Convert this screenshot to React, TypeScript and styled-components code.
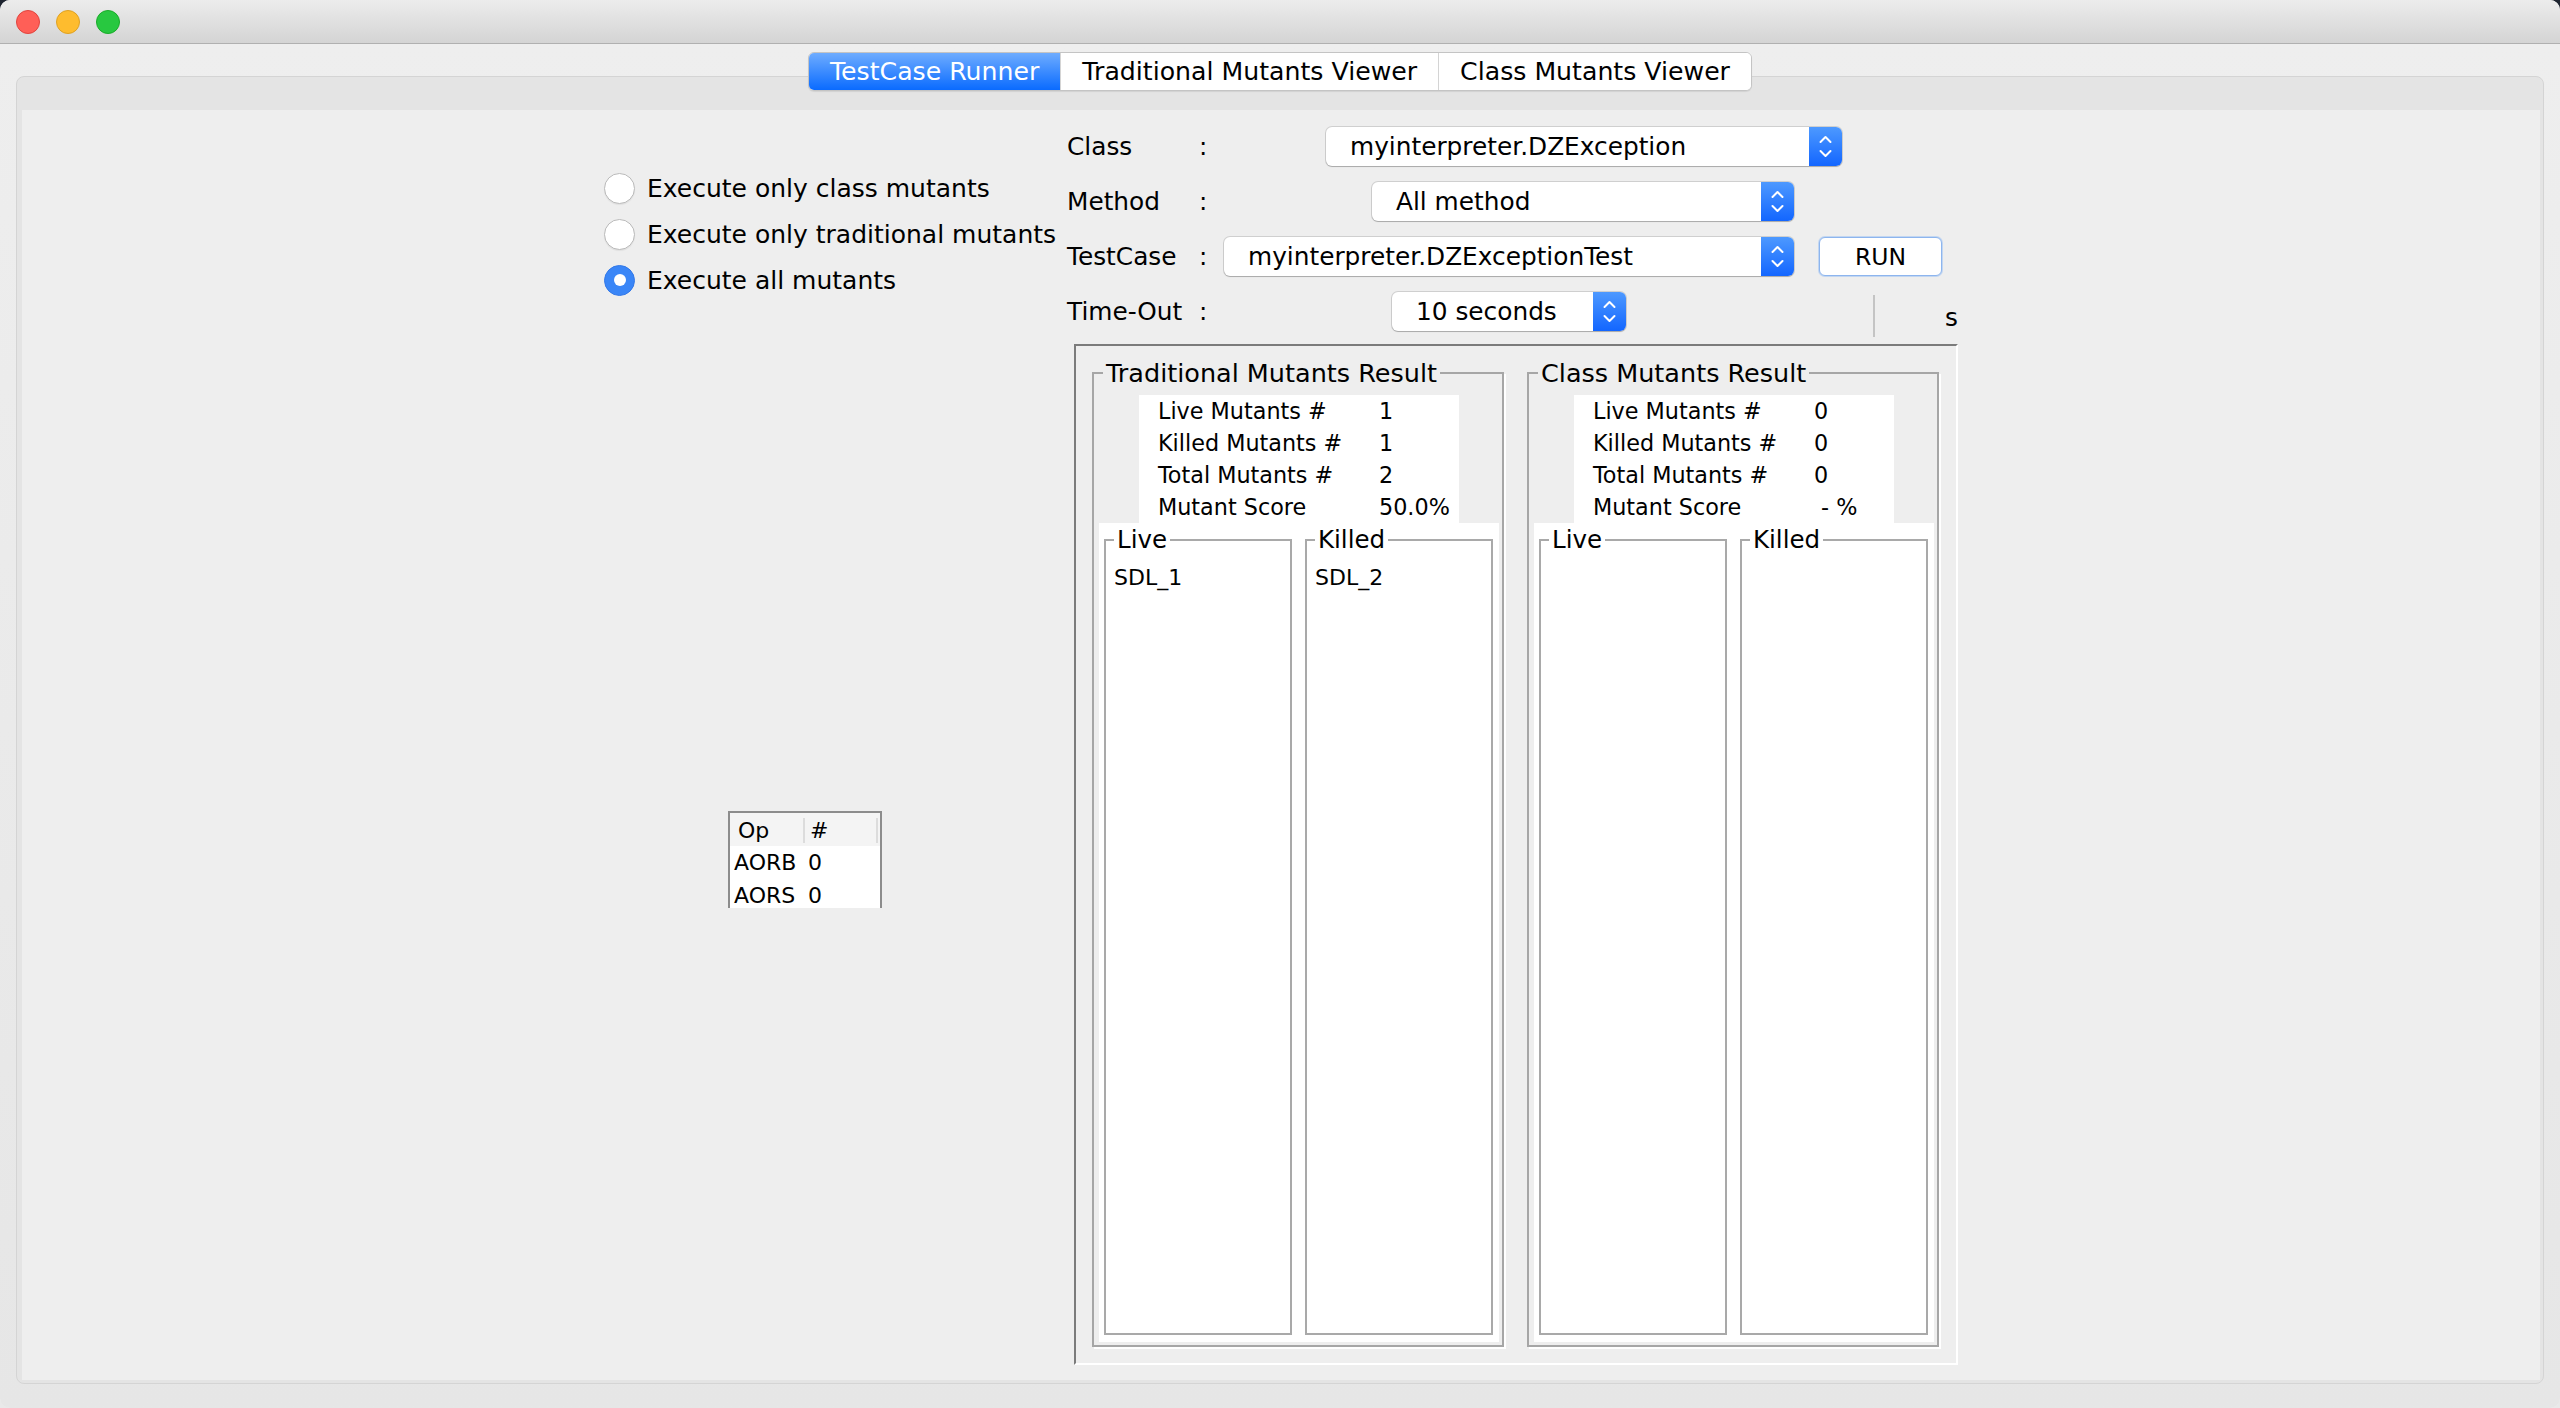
import React from 'react';
import styled, { createGlobalStyle } from 'styled-components';

const Global = createGlobalStyle`
  html, body { margin: 0; padding: 0; }
  body {
    width: 2560px;
    height: 1408px;
    overflow: hidden;
    background: linear-gradient(#1e2430 0, #1e2430 50%, #e9e9e9 50%, #e9e9e9 100%);
    font-family: "DejaVu Sans", "Liberation Sans", sans-serif;
    color: #000;
  }
  * { box-sizing: border-box; }
`;

const Window = styled.div`
  width: 2560px;
  height: 1408px;
  border-radius: 10px;
  overflow: hidden;
  display: flex;
  flex-direction: column;
  background: #eeeeee;
`;

const TitleBar = styled.div`
  height: 44px;
  flex: 0 0 44px;
  background: linear-gradient(#ececec, #d4d4d4);
  border-bottom: 1px solid #b0b0b0;
  display: flex;
  align-items: center;
  gap: 16px;
  padding-left: 16px;
`;

const Light = styled.span<{ $c: string; $b: string }>`
  width: 24px;
  height: 24px;
  border-radius: 50%;
  background: ${(p) => p.$c};
  border: 1px solid ${(p) => p.$b};
`;

const Body = styled.div`
  flex: 1;
  display: flex;
  flex-direction: column;
  padding: 8px 16px 24px 16px;
  background: linear-gradient(#eeeeee, #e6e6e6);
`;

const TabStrip = styled.div`
  align-self: center;
  display: flex;
  height: 39px;
  background: #fff;
  border: 1px solid #c4c4c4;
  border-radius: 6px;
  overflow: hidden;
  position: relative;
  z-index: 1;
  box-shadow: 0 1px 1px rgba(0, 0, 0, 0.08);
`;

const Tab = styled.div<{ $active?: boolean }>`
  display: flex;
  align-items: center;
  padding: 0 21px;
  font-size: 25.2px;
  white-space: nowrap;
  color: ${(p) => (p.$active ? '#fff' : '#000')};
  background: ${(p) => (p.$active ? 'linear-gradient(#6eacff, #0a6bff)' : '#fff')};
  & + & {
    border-left: 1px solid #d4d4d4;
  }
`;

const TabPane = styled.div`
  margin-top: -15px;
  flex: 1;
  display: flex;
  border: 1px solid #d4d4d4;
  border-radius: 8px;
  background: #e4e4e4;
  padding: 33px 3px 3px 5px;
`;

const Content = styled.div`
  flex: 1;
  background: #eeeeee;
  display: flex;
  justify-content: center;
`;

const LeftPanel = styled.div`
  width: 458px;
  display: flex;
  flex-direction: column;
  padding-top: 55px;
`;

const RadioList = styled.div`
  display: flex;
  flex-direction: column;
`;

const RadioRow = styled.label`
  height: 46px;
  display: flex;
  align-items: center;
  gap: 12px;
  font-size: 25px;
  white-space: nowrap;
`;

const RadioCircle = styled.span<{ $checked?: boolean }>`
  width: 31px;
  height: 31px;
  flex: 0 0 31px;
  border-radius: 50%;
  display: flex;
  align-items: center;
  justify-content: center;
  background: ${(p) => (p.$checked ? '#3a86f7' : '#fff')};
  border: 1px solid ${(p) => (p.$checked ? '#3479e8' : '#bababa')};
  box-shadow: ${(p) => (p.$checked ? 'none' : '0 1px 1px rgba(0,0,0,0.06)')};
  &::after {
    content: '';
    display: ${(p) => (p.$checked ? 'block' : 'none')};
    width: 12px;
    height: 12px;
    border-radius: 50%;
    background: #fff;
  }
`;

const OpTable = styled.div`
  margin-top: 508px;
  margin-left: 124px;
  width: 154px;
  height: 97px;
  overflow: hidden;
  background: #fff;
  border: 2px solid #8c8c8c;
  border-bottom: none;
  font-size: 22px;
`;

const OpHeader = styled.div`
  display: grid;
  grid-template-columns: 75px 1fr;
  height: 33px;
  background: #f4f4f4;
`;

const OpHeadCell = styled.div`
  display: flex;
  align-items: center;
  padding-left: 8px;
  margin: 5px 0 5px;
  border-right: 2px solid #dcdcdc;
  & + & {
    padding-left: 5px;
    margin-right: 2px;
  }
`;

const OpRow = styled.div`
  display: grid;
  grid-template-columns: 75px 1fr;
  height: 33px;
  align-items: center;
`;

const OpCell = styled.div`
  padding-left: 4px;
  & + & {
    padding-left: 3px;
  }
`;

const RightPanel = styled.div`
  width: 896px;
  display: flex;
  flex-direction: column;
  padding-top: 17px;
`;

const FormRow = styled.div`
  display: flex;
  align-items: center;
  height: 39px;
  margin-bottom: 16px;
`;

const TimeRow = styled.div`
  display: flex;
  align-items: flex-start;
  height: 45px;
`;

const LabelCell = styled.div<{ $w: number }>`
  width: ${(p) => p.$w}px;
  flex: 0 0 ${(p) => p.$w}px;
  display: flex;
  align-items: center;
  padding-left: 5px;
  font-size: 24.8px;
  white-space: nowrap;
  height: 39px;
`;

const LabelName = styled.span`
  min-width: 132px;
`;

const ComboBox = styled.div<{ $w: number }>`
  width: ${(p) => p.$w}px;
  height: 39px;
  flex: 0 0 auto;
  display: flex;
  background: #fff;
  border-radius: 6px;
  overflow: hidden;
  box-shadow: 0 0 0 1px rgba(0, 0, 0, 0.13), 0 1px 1px rgba(0, 0, 0, 0.18);
`;

const ComboText = styled.div`
  flex: 1;
  display: flex;
  align-items: center;
  padding-left: 24px;
  font-size: 24.8px;
  white-space: nowrap;
  overflow: hidden;
`;

const ComboArrow = styled.div`
  width: 33px;
  flex: 0 0 33px;
  background: linear-gradient(#4d99ff, #1366ff);
  display: flex;
`;

const RunButton = styled.button`
  margin-left: 25px;
  width: 123px;
  height: 39px;
  background: #fff;
  border: 1px solid #8db5ee;
  border-radius: 6px;
  box-shadow: 0 0 0 1px rgba(140, 185, 245, 0.45);
  font-family: "DejaVu Sans", "Liberation Sans", sans-serif;
  font-size: 23.5px;
  color: #000;
  padding: 0;
`;

const SmallField = styled.div`
  margin-left: 247px;
  margin-top: 3px;
  width: 14px;
  height: 42px;
  background: #fff;
  border: 1px solid #c4c4c4;
  box-shadow: inset 0 0 0 2px #ececec;
`;

const Unit = styled.span`
  margin-left: 70px;
  margin-top: 11px;
  font-size: 24.8px;
`;

const ResultsPanel = styled.div`
  margin-top: 7px;
  margin-left: 12px;
  width: 884px;
  height: 1021px;
  border: 2px solid;
  border-color: #7b7b7b #ffffff #ffffff #7b7b7b;
  background: #eeeeee;
  padding: 12px 17px 16px 16px;
  display: flex;
  gap: 23px;
`;

const Group = styled.fieldset`
  margin: 0;
  flex: 0 0 412px;
  min-width: 0;
  padding: 0 3px 3px 5px;
  border: 2px solid #a6a6a6;
  box-shadow: 2px 2px 0 #ffffff;
  display: flex;
  flex-direction: column;
`;

const GroupTitle = styled.legend`
  font-size: 25.5px;
  padding: 0 3px;
  margin-left: 4px;
  white-space: nowrap;
`;

const StatsBox = styled.div`
  align-self: center;
  margin-top: 7px;
  width: 320px;
  background: #fff;
  padding-left: 19px;
  display: grid;
  grid-template-columns: 221px 1fr;
  grid-auto-rows: 32px;
  align-items: center;
  font-size: 22.3px;
  white-space: pre;
`;

const LowerArea = styled.div`
  flex: 1;
  background: #fff;
  display: flex;
  gap: 13px;
  padding: 2px 6px 7px 5px;
`;

const ListGroup = styled.fieldset`
  margin: 0;
  flex: 1;
  min-width: 0;
  padding: 0 8px;
  border: 2px solid #a9a9a9;
  background: #fff;
  display: flex;
  flex-direction: column;
`;

const ListTitle = styled.legend`
  font-size: 24.5px;
  padding: 0 3px;
  margin-left: 0;
`;

const ListItem = styled.div`
  font-size: 22px;
  line-height: 26px;
  &:first-of-type {
    margin-top: 11px;
  }
`;

const Chevrons = () => (
  <svg width="33" height="39" viewBox="0 0 33 39" fill="none" stroke="#fff" strokeWidth="2" strokeLinecap="round" strokeLinejoin="round">
    <path d="M11.5 15 L16.5 10 L21.5 15" />
    <path d="M11.5 24 L16.5 29 L21.5 24" />
  </svg>
);

const Combo = ({ w, text }: { w: number; text: string }) => (
  <ComboBox $w={w}>
    <ComboText>{text}</ComboText>
    <ComboArrow>
      <Chevrons />
    </ComboArrow>
  </ComboBox>
);

type Stats = { live: string; killed: string; total: string; score: string };

const ResultGroup = ({
  title,
  stats,
  live,
  killed,
}: {
  title: string;
  stats: Stats;
  live: string[];
  killed: string[];
}) => (
  <Group>
    <GroupTitle>{title}</GroupTitle>
    <StatsBox>
      <span>Live Mutants #</span>
      <span>{stats.live}</span>
      <span>Killed Mutants #</span>
      <span>{stats.killed}</span>
      <span>Total Mutants #</span>
      <span>{stats.total}</span>
      <span>Mutant Score</span>
      <span>{stats.score}</span>
    </StatsBox>
    <LowerArea>
      <ListGroup>
        <ListTitle>Live</ListTitle>
        {live.map((m) => (
          <ListItem key={m}>{m}</ListItem>
        ))}
      </ListGroup>
      <ListGroup>
        <ListTitle>Killed</ListTitle>
        {killed.map((m) => (
          <ListItem key={m}>{m}</ListItem>
        ))}
      </ListGroup>
    </LowerArea>
  </Group>
);

export default function App() {
  return (
    <>
      <Global />
      <Window>
        <TitleBar>
          <Light $c="#ff5f57" $b="#e0443e" />
          <Light $c="#febc2e" $b="#dea123" />
          <Light $c="#28c840" $b="#1aab29" />
        </TitleBar>
        <Body>
          <TabStrip>
            <Tab $active>TestCase Runner</Tab>
            <Tab>Traditional Mutants Viewer</Tab>
            <Tab>Class Mutants Viewer</Tab>
          </TabStrip>
          <TabPane>
            <Content>
              <LeftPanel>
                <RadioList>
                  <RadioRow>
                    <RadioCircle />
                    Execute only class mutants
                  </RadioRow>
                  <RadioRow>
                    <RadioCircle />
                    Execute only traditional mutants
                  </RadioRow>
                  <RadioRow>
                    <RadioCircle $checked />
                    Execute all mutants
                  </RadioRow>
                </RadioList>
                <OpTable>
                  <OpHeader>
                    <OpHeadCell>Op</OpHeadCell>
                    <OpHeadCell>#</OpHeadCell>
                  </OpHeader>
                  <OpRow>
                    <OpCell>AORB</OpCell>
                    <OpCell>0</OpCell>
                  </OpRow>
                  <OpRow>
                    <OpCell>AORS</OpCell>
                    <OpCell>0</OpCell>
                  </OpRow>
                </OpTable>
              </LeftPanel>
              <RightPanel>
                <FormRow>
                  <LabelCell $w={264}>
                    <LabelName>Class</LabelName>:
                  </LabelCell>
                  <Combo w={516} text="myinterpreter.DZException" />
                </FormRow>
                <FormRow>
                  <LabelCell $w={310}>
                    <LabelName>Method</LabelName>:
                  </LabelCell>
                  <Combo w={422} text="All method" />
                </FormRow>
                <FormRow>
                  <LabelCell $w={162}>
                    <LabelName>TestCase</LabelName>:
                  </LabelCell>
                  <Combo w={570} text="myinterpreter.DZExceptionTest" />
                  <RunButton>RUN</RunButton>
                </FormRow>
                <TimeRow>
                  <LabelCell $w={330}>
                    <LabelName>Time-Out</LabelName>:
                  </LabelCell>
                  <Combo w={234} text="10 seconds" />
                  <SmallField />
                  <Unit>s</Unit>
                </TimeRow>
                <ResultsPanel>
                  <ResultGroup
                    title="Traditional Mutants Result"
                    stats={{ live: '1', killed: '1', total: '2', score: '50.0%' }}
                    live={['SDL_1']}
                    killed={['SDL_2']}
                  />
                  <ResultGroup
                    title="Class Mutants Result"
                    stats={{ live: '0', killed: '0', total: '0', score: ' - %' }}
                    live={[]}
                    killed={[]}
                  />
                </ResultsPanel>
              </RightPanel>
            </Content>
          </TabPane>
        </Body>
      </Window>
    </>
  );
}
